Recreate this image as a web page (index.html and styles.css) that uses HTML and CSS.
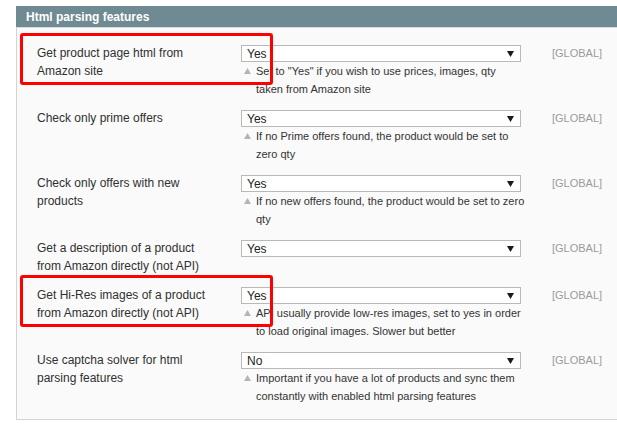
FILE: index.html
```html
<!DOCTYPE html>
<html>
<head>
<meta charset="utf-8">
<link rel="stylesheet" href="styles.css">
</head>
<body>
<div class="section">
  <div class="section-head">Html parsing features</div>
  <div class="section-body">
    <div class="row">
      <div class="label">Get product page html from Amazon site</div>
      <div class="control">
        <div class="select"><span>Yes</span><svg class="arrow" width="7" height="6" viewBox="0 0 7 6"><polygon points="0,0 7,0 3.5,6" fill="#1a1a1a"/></svg></div>
        <div class="note"><svg class="tri" width="7" height="6" viewBox="0 0 7 6"><polygon points="3.5,0 7,6 0,6" fill="#b4b4b4"/></svg><span>Set to "Yes" if you wish to use prices, images, qty taken from Amazon site</span></div>
      </div>
      <div class="scope">[GLOBAL]</div>
      <div class="mark"></div>
    </div>
    <div class="row">
      <div class="label">Check only prime offers</div>
      <div class="control">
        <div class="select"><span>Yes</span><svg class="arrow" width="7" height="6" viewBox="0 0 7 6"><polygon points="0,0 7,0 3.5,6" fill="#1a1a1a"/></svg></div>
        <div class="note"><svg class="tri" width="7" height="6" viewBox="0 0 7 6"><polygon points="3.5,0 7,6 0,6" fill="#b4b4b4"/></svg><span>If no Prime offers found, the product would be set to zero qty</span></div>
      </div>
      <div class="scope">[GLOBAL]</div>
    </div>
    <div class="row">
      <div class="label">Check only offers with new products</div>
      <div class="control">
        <div class="select"><span>Yes</span><svg class="arrow" width="7" height="6" viewBox="0 0 7 6"><polygon points="0,0 7,0 3.5,6" fill="#1a1a1a"/></svg></div>
        <div class="note"><svg class="tri" width="7" height="6" viewBox="0 0 7 6"><polygon points="3.5,0 7,6 0,6" fill="#b4b4b4"/></svg><span>If no new offers found, the product would be set to zero qty</span></div>
      </div>
      <div class="scope">[GLOBAL]</div>
    </div>
    <div class="row">
      <div class="label">Get a description of a product from Amazon directly (not API)</div>
      <div class="control">
        <div class="select"><span>Yes</span><svg class="arrow" width="7" height="6" viewBox="0 0 7 6"><polygon points="0,0 7,0 3.5,6" fill="#1a1a1a"/></svg></div>
      </div>
      <div class="scope">[GLOBAL]</div>
    </div>
    <div class="row">
      <div class="label">Get Hi-Res images of a product from Amazon directly (not API)</div>
      <div class="control">
        <div class="select"><span>Yes</span><svg class="arrow" width="7" height="6" viewBox="0 0 7 6"><polygon points="0,0 7,0 3.5,6" fill="#1a1a1a"/></svg></div>
        <div class="note"><svg class="tri" width="7" height="6" viewBox="0 0 7 6"><polygon points="3.5,0 7,6 0,6" fill="#b4b4b4"/></svg><span>API usually provide low-res images, set to yes in order to load original images. Slower but better</span></div>
      </div>
      <div class="scope">[GLOBAL]</div>
      <div class="mark"></div>
    </div>
    <div class="row">
      <div class="label">Use captcha solver for html parsing features</div>
      <div class="control">
        <div class="select"><span>No</span><svg class="arrow" width="7" height="6" viewBox="0 0 7 6"><polygon points="0,0 7,0 3.5,6" fill="#1a1a1a"/></svg></div>
        <div class="note"><svg class="tri" width="7" height="6" viewBox="0 0 7 6"><polygon points="3.5,0 7,6 0,6" fill="#b4b4b4"/></svg><span>Important if you have a lot of products and sync them constantly with enabled html parsing features</span></div>
      </div>
      <div class="scope">[GLOBAL]</div>
    </div>
  </div>
</div>
</body>
</html>
```
FILE: styles.css
```css
html, body {
  margin: 0;
  padding: 0;
  background: #ffffff;
  overflow: hidden;
}
body {
  padding: 6px 0 0 16px;
  font-family: "Liberation Sans", Arial, sans-serif;
  color: #303030;
}
.section {
  width: calc(100vw - 16px);
}
.section-head {
  height: 22px;
  line-height: 22px;
  background: #6f8a92;
  color: #ffffff;
  font-weight: bold;
  font-size: 12px;
  padding-left: 10px;
  border-bottom: 1px solid #d9dcdd;
  box-sizing: border-box;
}
.section-body {
  background: #fafafa;
  border-left: 1px solid #d3d3d3;
  border-bottom: 1px solid #d3d3d3;
  padding: 16px 0 14px 20px;
  display: flex;
  flex-direction: column;
  gap: 11px;
}
.row {
  position: relative;
  display: grid;
  grid-template-columns: 204px 280px 1fr;
  align-items: start;
}
.label {
  width: 180px;
  font-size: 12px;
  line-height: 18px;
  color: #303030;
}
.control {
  padding-top: 1px;
}
.select {
  height: 17px;
  box-sizing: border-box;
  border: 1px solid #b9b9b9;
  background: #ffffff;
  display: flex;
  align-items: center;
  justify-content: space-between;
  padding: 0 6px 0 5px;
  font-size: 12px;
  color: #222;
}
.arrow {
  display: block;
}
.note {
  display: flex;
  align-items: flex-start;
  margin-right: -4px;
  font-size: 11px;
  line-height: 18px;
  color: #333333;
}
.tri {
  flex: none;
  margin: 6px 5px 0 3px;
}
.scope {
  padding: 2px 0 0 31px;
  font-size: 11px;
  line-height: 14px;
  color: #9a9a9a;
}
.mark {
  position: absolute;
  left: -17px;
  top: -11px;
  width: 253px;
  height: 52px;
  box-sizing: border-box;
  border: 3px solid #ff0000;
  border-radius: 3px;
}
```
